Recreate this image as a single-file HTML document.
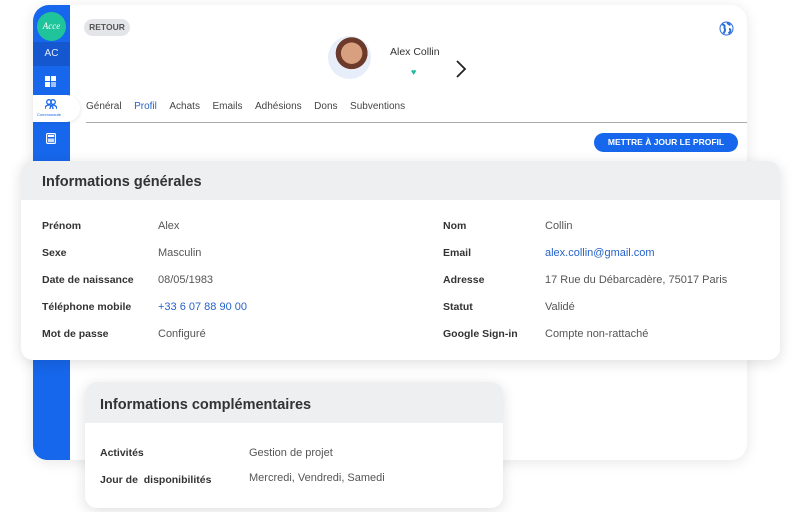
<!DOCTYPE html>
<html><head><meta charset="utf-8"><style>
*{box-sizing:border-box;margin:0;padding:0}
body{width:800px;height:512px;background:#fff;font-family:"Liberation Sans",Arial,sans-serif;position:relative;overflow:hidden;color:#333}
.main{position:absolute;left:33px;top:5px;width:714px;height:455px;background:#fff;border-radius:16px;box-shadow:0 2px 14px rgba(0,0,0,.10)}
.side{position:absolute;left:33px;top:5px;width:37px;height:455px;background:#1767ec;border-radius:16px 0 0 14px}
.ac{position:absolute;left:33px;top:42px;width:37px;height:24px;background:#1457cf;color:#e8efff;font-size:10px;text-align:center;line-height:24px}
.logo{position:absolute;left:37px;top:12px;width:29px;height:29px;border-radius:50%;background:#1fc49a;color:#fff;font-family:"Liberation Serif",serif;font-style:italic;font-size:9px;line-height:29px;text-align:center}
.tab{position:absolute;left:33px;top:95px;width:47px;height:27px;background:#fff;border-radius:0 14px 14px 0;box-shadow:1px 1px 3px rgba(0,0,0,.08)}
.retour{position:absolute;left:84px;top:19px;width:46px;height:17px;border-radius:9px;background:#e4e5e8;font-size:8.5px;font-weight:bold;color:#555;text-align:center;line-height:17px}
.av{position:absolute;left:328px;top:36px;width:43px;height:43px;border-radius:50%;background:radial-gradient(circle at 55% 40%,#d9a07f 0 30%,#6b3a2a 31% 45%,#e7eef9 46%)}
.name{position:absolute;left:390px;top:46px;font-size:10.5px;color:#333}
.nav{position:absolute;left:86px;top:101px;font-size:10px;color:#444}
.nav span{margin-right:12.5px}
.line{position:absolute;left:86px;top:122px;width:661px;height:1px;background:#aaa}
.btn{position:absolute;left:594px;top:133px;width:144px;height:19px;border-radius:10px;background:#1767ec;color:#fff;font-size:8.5px;font-weight:bold;text-align:center;line-height:19px}
.card{position:absolute;background:#fff;border-radius:12px;box-shadow:0 3px 14px rgba(0,0,0,.13);overflow:hidden}
.hd{background:#eeeff1;font-weight:bold;color:#333}
.r{position:absolute;font-size:11px;color:#555}
.l{font-weight:bold;color:#333;font-size:10.5px}
.b{color:#2563c9}
</style></head><body>
<div class="main"></div>
<div class="side"></div>
<div class="ac">AC</div>
<div class="logo">Acce</div>
<svg style="position:absolute;left:45px;top:76px" width="11" height="11"><rect x="0" y="0" width="5" height="5" fill="#fff"/><rect x="6" y="0" width="5" height="5" fill="#fff"/><rect x="0" y="6" width="5" height="5" fill="#fff"/><rect x="6" y="6" width="5" height="5" fill="#fff" opacity=".6"/></svg>
<div class="tab"></div>
<svg style="position:absolute;left:45px;top:99px" width="12" height="10"><circle cx="4" cy="3" r="2.3" fill="none" stroke="#1767ec" stroke-width="1.3"/><circle cx="8" cy="3" r="2.3" fill="none" stroke="#1767ec" stroke-width="1.3"/><path d="M0 10c0-3 2-4 4-4s4 1 4 4M5 10c0-3 2-4 3-4s4 1 4 4" fill="none" stroke="#1767ec" stroke-width="1.3"/></svg>
<div style="position:absolute;left:37px;top:112px;font-size:4px;color:#1767ec">Communauté</div>
<svg style="position:absolute;left:46px;top:133px" width="10" height="11"><rect x=".6" y=".6" width="8.8" height="9.8" rx="1" fill="none" stroke="#fff" stroke-width="1.2"/><rect x="2" y="2" width="6" height="2" fill="#fff"/><rect x="2" y="5.5" width="6" height="3.5" fill="#fff" opacity=".8"/></svg>
<div class="retour">RETOUR</div>
<svg style="position:absolute;left:719px;top:21px" width="15" height="15"><circle cx="7.5" cy="7.5" r="6.5" fill="#fff" stroke="#2b6fd6" stroke-width="1"/><path d="M3 3.5c2 0 3 1 2.5 2.5s1 2 .5 3.5-1 2-1.5 3M8.5 1.5c0 1.5 1.5 2 3 2.5M10 8c1.5 0 2 1.5 1 3l-1.5 1.5" stroke="#2b6fd6" stroke-width="2" fill="none"/></svg>
<div class="av"></div>
<div class="name">Alex Collin</div>
<div style="position:absolute;left:411px;top:67px;color:#1fb899;font-size:9px">♥</div>
<svg style="position:absolute;left:455px;top:60px" width="12" height="18"><path d="M2 1l8 8-8 8" stroke="#222" stroke-width="1.8" fill="none"/></svg>
<div class="nav"><span>Général</span><span style="color:#2563c9">Profil</span><span>Achats</span><span>Emails</span><span>Adhésions</span><span>Dons</span><span>Subventions</span></div>
<div class="line"></div>
<div class="btn">METTRE À JOUR LE PROFIL</div>

<div class="card" style="left:21px;top:161px;width:759px;height:199px">
<div class="hd" style="height:39px;padding:13px 0 0 21px;font-size:14.5px">Informations générales</div>
<div class="r l" style="left:21px;top:59px">Prénom</div><div class="r" style="left:137px;top:59px">Alex</div>
<div class="r l" style="left:21px;top:86px">Sexe</div><div class="r" style="left:137px;top:86px">Masculin</div>
<div class="r l" style="left:21px;top:113px">Date de naissance</div><div class="r" style="left:137px;top:113px">08/05/1983</div>
<div class="r l" style="left:21px;top:140px">Téléphone mobile</div><div class="r b" style="left:137px;top:140px">+33 6 07 88 90 00</div>
<div class="r l" style="left:21px;top:167px">Mot de passe</div><div class="r" style="left:137px;top:167px">Configuré</div>
<div class="r l" style="left:422px;top:59px">Nom</div><div class="r" style="left:524px;top:59px">Collin</div>
<div class="r l" style="left:422px;top:86px">Email</div><div class="r b" style="left:524px;top:86px">alex.collin@gmail.com</div>
<div class="r l" style="left:422px;top:113px">Adresse</div><div class="r" style="left:524px;top:113px">17 Rue du Débarcadère, 75017 Paris</div>
<div class="r l" style="left:422px;top:140px">Statut</div><div class="r" style="left:524px;top:140px">Validé</div>
<div class="r l" style="left:422px;top:167px">Google Sign-in</div><div class="r" style="left:524px;top:167px">Compte non-rattaché</div>
</div>

<div class="card" style="left:85px;top:382px;width:418px;height:126px">
<div class="hd" style="height:41px;padding:15px 0 0 15px;font-size:14.5px">Informations complémentaires</div>
<div class="r l" style="left:15px;top:65px">Activités</div><div class="r" style="left:164px;top:65px">Gestion de projet</div>
<div class="r l" style="left:15px;top:92px">Jour de&nbsp; disponibilités</div><div class="r" style="left:164px;top:90px">Mercredi, Vendredi, Samedi</div>
</div>
</body></html>
